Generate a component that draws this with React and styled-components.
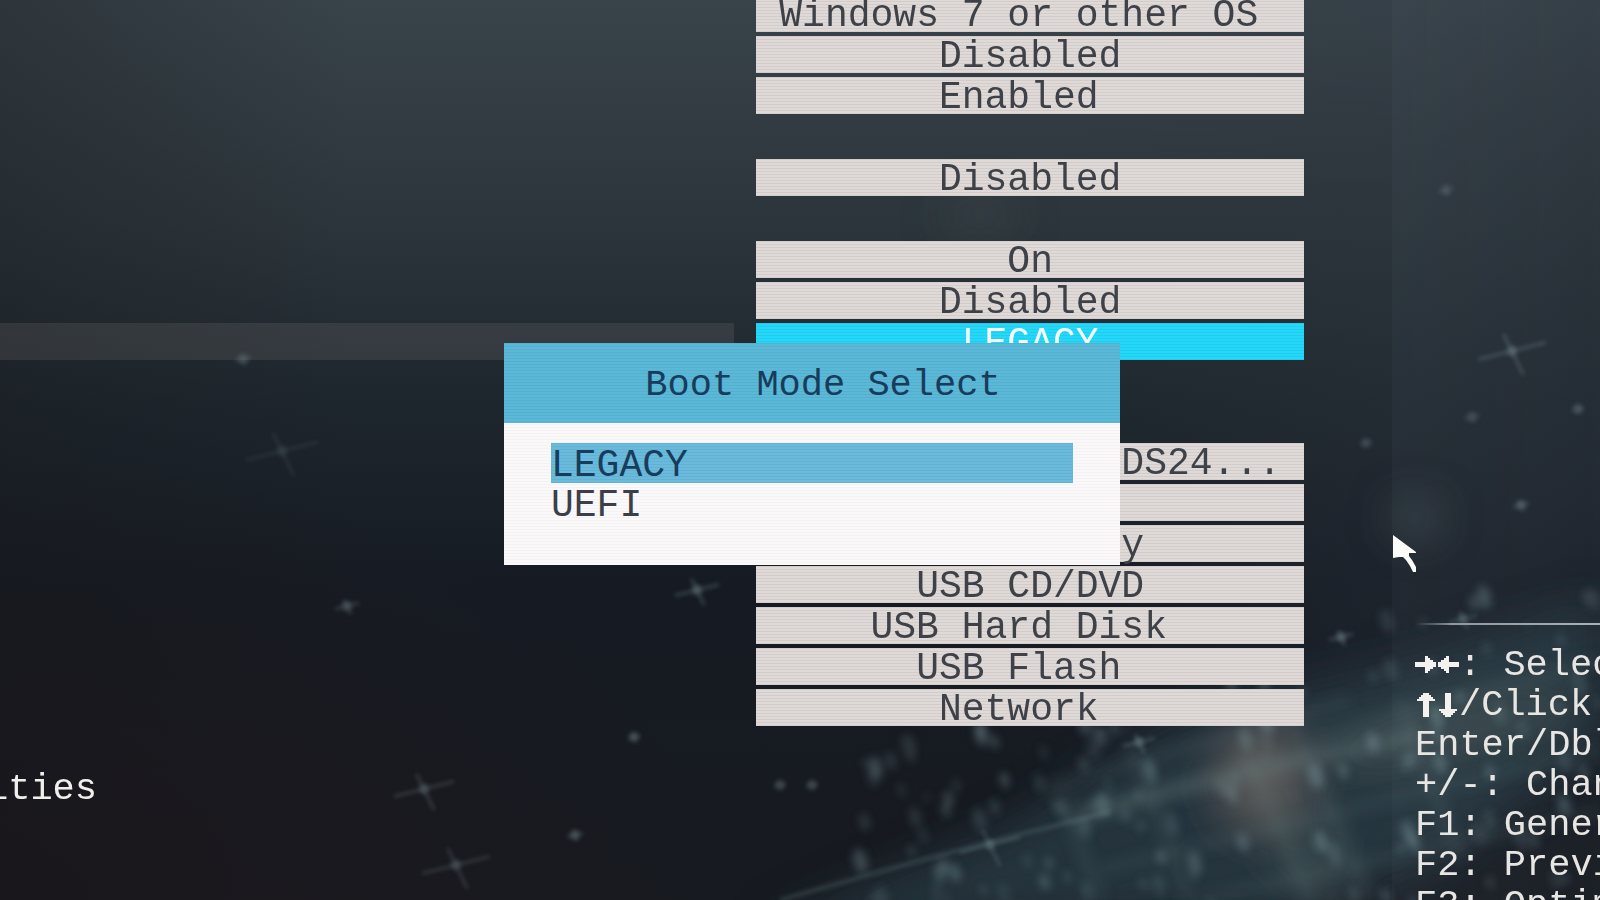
import React from 'react';
import styled, { createGlobalStyle } from 'styled-components';

const Global = createGlobalStyle`
  *, *::before, *::after { box-sizing: border-box; }
  html, body, #root { height: 100%; }
  body { margin: 0; background: #171b21; overflow: hidden; }
`;

const scanlines = 'repeating-linear-gradient(180deg, rgba(60, 50, 50, 0.08) 0 1px, transparent 1px 3px)';
const faintScanlines = 'repeating-linear-gradient(180deg, rgba(60, 50, 50, 0.03) 0 1px, transparent 1px 3px)';

const Screen = styled.div`
  position: relative;
  min-height: 100vh;
  overflow: hidden;
  isolation: isolate;
  font-family: "Liberation Mono", monospace;
  font-size: 38px;
  line-height: 37px;
  background:
    linear-gradient(90deg, rgba(20, 22, 26, 0.3), transparent 22%),
    radial-gradient(ellipse 45% 50% at 0% 100%, rgba(32, 22, 26, 0.6), transparent),
    radial-gradient(ellipse 40% 90% at 100% 50%, rgba(44, 52, 62, 0.5), transparent),
    linear-gradient(180deg, #39434a 0%, #2c353b 25%, #1e262d 45%, #161b23 65%, #171a20 100%);
`;

const Sky = styled.svg`
  position: absolute;
  inset: 0;
  width: 100%;
  height: 100%;
  z-index: -1;
`;

const Layout = styled.main`
  display: grid;
  grid-template-columns: 81.5% minmax(0, 1fr);
  height: 100vh;
`;

const Settings = styled.section`
  display: flex;
  flex-direction: column;
  margin-top: -5px;
`;

const Group = styled.div`
  display: flex;
  flex-direction: column;
  gap: 4px;
  margin-bottom: ${(p) => (p.$wide ? 83 : 45)}px;
`;

const Row = styled.div`
  display: grid;
  grid-template-columns: 58% minmax(0, 1fr);
`;

const LabelCell = styled.div`
  margin-right: 22px;
  background: ${(p) => (p.$active ? 'rgba(130, 125, 125, 0.2)' : 'transparent')};
`;

const Value = styled.button`
  height: 37px;
  margin: 0;
  padding: 4px 0 0;
  border: 0;
  border-radius: 0;
  font: inherit;
  line-height: 33px;
  white-space: pre;
  text-align: center;
  color: ${(p) => (p.$active ? '#f4ffff' : '#3e4248')};
  background: ${scanlines}, ${(p) => (p.$active ? '#22d8fb' : '#dfd9d7')};
`;

const MenuLink = styled.a`
  align-self: flex-start;
  margin-left: -14px;
  font-size: 37px;
  color: #f1efec;
  text-decoration: none;
`;

const Help = styled.aside`
  display: flex;
  flex-direction: column;
  justify-content: flex-end;
  margin-left: 88px;
  padding-left: 23px;
  overflow: hidden;
  background: linear-gradient(90deg, rgba(120, 140, 150, 0.06), transparent);
`;

const Divider = styled.hr`
  width: 100%;
  height: 2px;
  margin: 0 0 20px;
  border: 0;
  background: linear-gradient(90deg, transparent, #8e989d 20%, #aab2b6);
`;

const HelpList = styled.ul`
  flex: 0 0 255px;
  min-height: 0;
  margin: 0;
  padding: 0;
  list-style: none;
  font-size: 37px;
  line-height: 40px;
  color: #e8e6e2;
`;

const HelpLine = styled.li`
  display: flex;
  align-items: center;
  height: 40px;
  white-space: pre;
`;

const Arrow = styled.svg`
  flex: none;
  width: 22px;
  height: 26px;
  fill: #f4f2ee;
`;

const Dialog = styled.div`
  position: absolute;
  top: 343px;
  left: 31.5%;
  width: 38.5%;
  background: ${faintScanlines}, #faf8f8;
`;

const DialogTitle = styled.h2`
  height: 80px;
  margin: 0;
  padding: 4px 0 0 22px;
  font: inherit;
  font-size: 37px;
  line-height: 76px;
  text-align: center;
  color: #173c5c;
  background: ${scanlines}, #5ab9d8;
`;

const Options = styled.div`
  display: flex;
  flex-direction: column;
  padding: 20px 47px 42px;
`;

const Option = styled.button`
  height: 40px;
  padding: 6px 0 0;
  border: 0;
  font: inherit;
  line-height: 34px;
  text-align: left;
  color: ${(p) => (p.$active ? '#173c5c' : '#3a3f48')};
  background: ${(p) => (p.$active ? `${scanlines}, #68bbdc` : 'transparent')};
`;

const Pointer = styled.svg`
  position: absolute;
  left: 87%;
  top: 534px;
  width: 26px;
  height: 40px;
`;

const groups = [
  { rows: ['Windows 7 or other OS', 'Disabled', 'Enabled'] },
  { rows: ['Disabled'] },
  { rows: ['On', 'Disabled', 'LEGACY'], active: 2, wide: true },
  {
    rows: ['DS24...'.padStart(22), '', 'y'.padStart(10), 'USB CD/DVD', 'USB Hard Disk', 'USB Flash', 'Network'],
  },
];

const onGrid = (text) => (text.length % 2 ? `${text} ` : text);

const arrowPaths = {
  right: 'M0 10H10V4H13V6H15V8H18V10H21V15H18V17H15V19H13V21H10V15H0Z',
  left: 'M22 10H12V4H9V6H7V8H4V10H1V15H4V17H7V19H9V21H12V15H22Z',
  up: 'M8 1H14V3H16V5H18V7H20V9H14V25H8V9H2V7H4V5H6V3H8Z',
  down: 'M8 1H14V17H20V19H18V21H16V23H14V25H8V23H6V21H4V19H2V17H8Z',
};

const help = [
  { arrows: ['right', 'left'], text: ': Select' },
  { arrows: ['up', 'down'], text: '/Click:' },
  { text: 'Enter/Dbl' },
  { text: '+/-: Change' },
  { text: 'F1: General' },
  { text: 'F2: Previous' },
  { text: 'F3: Optimized' },
];

// Small seeded generator, so that the star field is the same on each load.
function makeStars(count) {
  let seed = 41;
  const next = () => {
    seed = (seed * 16807) % 2147483647;
    return seed / 2147483647;
  };
  return Array.from({ length: count }, () => {
    const x = 860 + next() * 740;
    const spread = 1 - (x - 860) / 1000;
    return {
      x,
      y: 930 - next() * (1 - spread * 0.6) * 440,
      r: 2 + next() * 5,
      o: 0.1 + next() * 0.25,
    };
  });
}

const stars = makeStars(150);
const brightStars = [
  [282, 451, 36, 0.16], [347, 606, 12, 0.3], [424, 789, 30, 0.3], [456, 865, 34, 0.28],
  [697, 590, 22, 0.35], [1512, 351, 34, 0.35], [243, 359, 8, 0.25], [575, 835, 8, 0.3],
  [1341, 637, 12, 0.35], [1446, 190, 8, 0.2], [1139, 742, 16, 0.35], [1463, 619, 14, 0.3],
  [634, 737, 6, 0.3], [990, 845, 30, 0.3], [1366, 443, 6, 0.2], [1521, 505, 8, 0.3],
  [1578, 409, 6, 0.25], [1472, 417, 8, 0.2], [780, 785, 6, 0.25], [812, 785, 6, 0.25],
];

function Nebula() {
  return (
    <Sky viewBox="0 0 1600 900" preserveAspectRatio="none" aria-hidden="true">
      <defs>
        <filter id="haze" x="-50%" y="-50%" width="200%" height="200%"><feGaussianBlur stdDeviation="22" /></filter>
        <filter id="streak" x="-20%" y="-20%" width="140%" height="140%"><feGaussianBlur stdDeviation="7" /></filter>
        <filter id="soft" x="-20%" y="-20%" width="140%" height="140%"><feGaussianBlur stdDeviation="4" /></filter>
        <filter id="glow" x="-50%" y="-50%" width="200%" height="200%"><feGaussianBlur stdDeviation="2" /></filter>
      </defs>
      <g filter="url(#haze)">
        <path d="M760 930L1000 830L1180 720L1420 660L1600 600V740L1440 860L1290 920Z" fill="#2c4650" opacity="0.6" />
        <ellipse cx="1262" cy="778" rx="44" ry="52" fill="#5f5e5d" opacity="0.95" />
        <ellipse cx="1450" cy="730" rx="130" ry="24" fill="#4d5c5a" opacity="0.6" transform="rotate(-14 1450 730)" />
        <ellipse cx="1310" cy="860" rx="30" ry="60" fill="#4c585a" opacity="0.5" transform="rotate(-20 1310 860)" />
        <ellipse cx="1415" cy="518" rx="26" ry="18" fill="#56666a" opacity="0.5" />
        <ellipse cx="980" cy="215" rx="40" ry="14" fill="#4a555a" opacity="0.4" />
      </g>
      <g filter="url(#streak)" stroke="#6c8284" fill="none">
        <path d="M1080 815L1230 775L1420 735" strokeWidth="18" opacity="0.32" />
        <path d="M1240 740L1310 900M1290 720L1370 900M1130 745L1190 900M1060 790L1100 900M1400 700L1460 860" strokeWidth="12" opacity="0.16" />
        <path d="M1100 870L1600 750M1040 790L1350 700M1200 900L1600 810M1310 740L1600 660" strokeWidth="10" opacity="0.16" />
      </g>
      <g filter="url(#glow)" stroke="#7c999c" fill="none">
        <path d="M780 900L900 866L990 842L1110 812" strokeWidth="4" opacity="0.25" />
      </g>
      <g filter="url(#soft)" fill="#8fb0b6">
        {stars.map((s, i) => (
          <ellipse key={i} cx={s.x} cy={s.y} rx={s.r} ry={s.r * 1.8} opacity={s.o} transform={`rotate(-15 ${s.x} ${s.y})`} />
        ))}
      </g>
      <g filter="url(#glow)" stroke="#9dbcc4" strokeWidth="2">
        {brightStars.map(([x, y, r, o]) => (
          <g key={x} opacity={o}>
            <path d={`M${x - r} ${y + r / 4}L${x + r} ${y - r / 4}M${x - r / 4} ${y - r / 2}L${x + r / 3} ${y + r * 0.7}`} />
            <circle cx={x} cy={y} r="4" fill="#b6d0d6" />
          </g>
        ))}
      </g>
    </Sky>
  );
}

export default function App() {
  return (
    <>
      <Global />
      <Screen>
        <Nebula />
        <Layout>
          <Settings>
            {groups.map((group, g) => (
              <Group key={g} $wide={group.wide}>
                {group.rows.map((text, i) => {
                  const active = group.active === i;
                  return (
                    <Row key={i}>
                      <LabelCell $active={active} />
                      <Value type="button" $active={active}>{onGrid(text)}</Value>
                    </Row>
                  );
                })}
              </Group>
            ))}
            <MenuLink href="#priorities">ities</MenuLink>
          </Settings>
          <Help>
            <Divider />
            <HelpList>
              {help.map((line) => (
                <HelpLine key={line.text}>
                  {line.arrows?.map((name) => (
                    <Arrow key={name} viewBox="0 0 22 26"><path d={arrowPaths[name]} /></Arrow>
                  ))}
                  {line.text}
                </HelpLine>
              ))}
            </HelpList>
          </Help>
        </Layout>
        <Dialog role="dialog" aria-labelledby="dialog-title">
          <DialogTitle id="dialog-title">Boot Mode Select</DialogTitle>
          <Options>
            <Option type="button" $active>LEGACY</Option>
            <Option type="button">UEFI</Option>
          </Options>
        </Dialog>
        <Pointer viewBox="0 0 26 40" aria-hidden="true">
          <path d="M1 1L24 18V19H17V22L20 26L24 33V38H21L18 32L14 26L11 23H7L1 24Z" fill="#fbfbf9" />
        </Pointer>
      </Screen>
    </>
  );
}
